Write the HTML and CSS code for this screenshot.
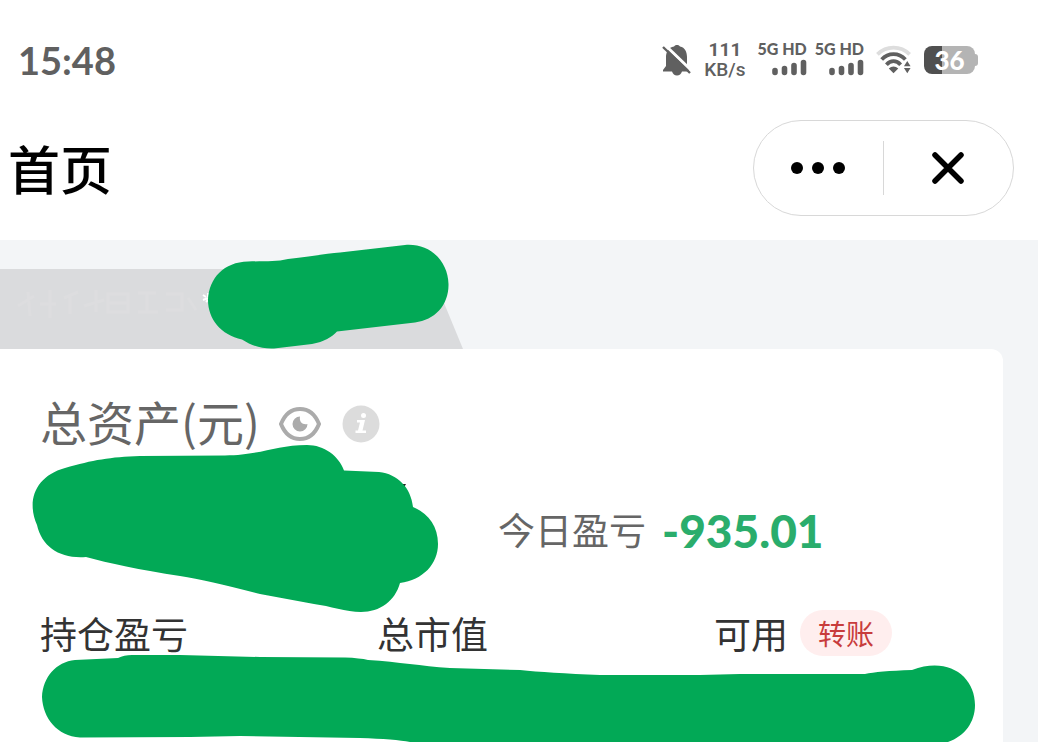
FILE: index.html
```html
<!DOCTYPE html>
<html lang="zh-CN">
<head>
<meta charset="utf-8">
<meta name="viewport" content="width=device-width, initial-scale=1">
<title>首页</title>
<link rel="stylesheet" href="styles.css">
</head>
<body>
<header class="header">
  <div class="status">
    <time class="clock">15:48</time>
    <div class="indicators">
      <svg class="bell" viewBox="0 0 30 34" aria-hidden="true">
        <path fill="#606060" d="M15 2c-1.500 0-2.500.7-3 1.500C6.500 4.500 4 9 4 14v9l-3 4v1.500h9c1 2.500 2.500 4 5 4s4-1.500 5-4h7V27l-2-4V14c0-5-2-9.500-7-10.500-.5-.8-1.500-1.500-3-1.500z"/>
        <path stroke="#fff" stroke-width="3" d="M3 2l28 27"/>
        <path stroke="#606060" stroke-width="2.400" d="M1 4l27 26"/>
      </svg>
      <div class="speed"><span>111</span><span class="unit">KB/s</span></div>
      <div class="signals">
        <div class="signal"><span>5G HD</span>
          <svg viewBox="0 0 36 17" aria-hidden="true"><g stroke="#606060" stroke-width="5.600" stroke-linecap="round"><path d="M4 11.500v2M13.500 9.500v4M23 6.500v7M32.500 3.500v10"/></g></svg>
        </div>
        <div class="signal"><span>5G HD</span>
          <svg viewBox="0 0 36 17" aria-hidden="true"><g stroke="#606060" stroke-width="5.600" stroke-linecap="round"><path d="M4 11.500v2M13.500 9.500v4M23 6.500v7M32.500 3.500v10"/></g></svg>
        </div>
      </div>
      <svg class="wifi" viewBox="0 0 38 30" aria-hidden="true">
        <g fill="none" stroke-width="4">
          <path stroke="#ddd" d="M1.500 9C11-.5 26-.5 35.500 9"/>
          <path stroke="#606060" d="M6 14.500C13 7 24 7 31 14.500"/>
          <path stroke="#606060" d="M11 20c4.500-5 10.500-5 15 0"/>
        </g>
        <path fill="#606060" d="M13.500 24c3-3 7-3 10 0L18.500 29zM29.500 21.500L33 16l3.500 5.500zM29.500 23.500L33 29l3.500-5.500z"/>
      </svg>
      <div class="battery"><span class="cell">36</span></div>
    </div>
  </div>
  <div class="nav">
    <h1>首页</h1>
    <div class="capsule">
      <button type="button" aria-label="更多">
        <svg viewBox="0 0 56 14" width="56" height="14"><circle cx="6" cy="7" r="6"/><circle cx="27" cy="7" r="6"/><circle cx="48" cy="7" r="6"/></svg>
      </button>
      <button type="button" aria-label="关闭">
        <svg viewBox="0 0 34 34" width="34" height="34"><path d="M3 4l26 26M29 4L3 30" stroke="#000" stroke-width="5.500" stroke-linecap="round"/></svg>
      </button>
    </div>
  </div>
</header>

<main class="main">
  <div class="tabs">
    <div class="tab"></div>
    <svg class="mark mark-tab" viewBox="0 240 480 110" aria-hidden="true">
      <g fill="none" stroke="#dddddf" stroke-width="3">
        <path d="M18 306l16-10M28 292l2 24M40 304h16M50 290v28M64 298l14-6M70 294v20M84 306l20-6M96 290v22M108 294h20v18h-20zM108 303h20M138 293h18M147 293v20M138 312h20M166 294h16v16h-16M188 298l8 12"/>
      </g>
      <path stroke="#fff" stroke-width="2" d="M203 295l3 2M208 293v4M203 300l5-2M206 302l2-2"/>
      <path fill="#02a956" d="M248 261.500C266 261 276 262 288 259C310 257 328 253 340 252.500L405 245C430 243 448 261 448.500 284C449 305 435 320 415 322.500L337 331.500C332 337 324 342 312 344L274 348.500C262 349 252 346 242 339.500C221 335 208 319 208 300C209 278 224 262 248 261.500Z"/>
    </svg>
  </div>

  <section class="card">
    <div class="heading">
      <h2>总资产(元)</h2>
      <button type="button" class="icon" aria-label="隐藏金额">
        <svg viewBox="0 0 44 36" width="44" height="36">
          <path fill="none" stroke="#ababab" stroke-width="4" d="M3 18C7 8 14 3 22 3s15 5 19 15c-4 10-11 15-19 15S7 28 3 18z"/>
          <path fill="#ababab" d="M22 10.500a7.500 7.500 0 1 0 7.500 7.500c-5 1-8.500-2-7.500-7.500z"/>
        </svg>
      </button>
      <button type="button" class="icon" aria-label="说明">
        <svg viewBox="0 0 38 38" width="38" height="38">
          <circle cx="19" cy="19" r="18.500" fill="#dcdcdc"/>
          <circle cx="21.500" cy="10.500" r="2.500" fill="#fff"/>
          <path fill="#fff" d="M15 15h8l-2.500 10.500H24V28H13.500v-2.500H16l2-8h-3z"/>
        </svg>
      </button>
    </div>
    <div class="today">
      <span class="today-label">今日盈亏</span>
      <strong class="today-value">-935.01</strong>
    </div>
    <div class="metrics">
      <span>持仓盈亏</span>
      <span>总市值</span>
      <span class="available">可用 <button type="button" class="transfer">转账</button></span>
    </div>
    <svg class="mark mark-card" viewBox="0 349 1003 393" aria-hidden="true">
      <path fill="#222" d="M397 484h9l-4 7z"/>
      <g fill="#02a956">
        <path d="M65 468C93 460 110 457 140 456L225 455.500C262 455 276 445 307 445C324 445 339 456 344 470.500L379 472C398 474 411 488 413 507C428 513 438 526 438 544C438 564 423 580 400 583C395 601 380 612 361 612C346 612 330 606 314 604L260 594C226 585 200 579 180 576C140 570 108 563 86 557C60 559 42 547 37 525C26 500 36 476 65 468Z"/>
        <path d="M75 660L118 658Q124 655 132 655L180 655L260 657L345 657.500Q360 658 368 660C400 662 420 666 450 668L520 670Q548 673 600 675L700 675L740 674L865 674Q878 671 912 670C948 656 975 676 975 705C975 722 965 736 948 742L410 742Q395 739 360 738L240 736L190 737L80 737.500C57 736 43 718 42 697C43 677 56 662 75 660Z"/>
      </g>
    </svg>
  </section>
</main>
</body>
</html>
```
FILE: styles.css
```css
* {
  box-sizing: border-box;
}

body {
  margin: 0;
  min-height: 100vh;
  display: flex;
  flex-direction: column;
  background: #f3f5f7;
  color: #333;
  font-family: "Noto Sans CJK SC", sans-serif;
}

h1,
h2 {
  margin: 0;
}

button {
  display: flex;
  align-items: center;
  justify-content: center;
  padding: 0;
  border: 0;
  background: none;
  font: inherit;
}

.header {
  height: 240px;
  background: #fff;
}

.status {
  display: flex;
  align-items: center;
  justify-content: space-between;
  height: 120px;
  padding: 0 60px 0 18px;
  color: #606060;
  font-family: Lato, sans-serif;
  font-weight: 700;
}

.clock {
  font-size: 38px;
  line-height: 46px;
}

.indicators {
  display: flex;
  align-items: center;
  gap: 12px;
}

.bell {
  width: 30px;
  height: 34px;
}

.speed {
  display: flex;
  flex-direction: column;
  align-items: center;
  font-family: Roboto, sans-serif;
  font-size: 19px;
  line-height: 20px;
}

.unit {
  font-weight: 500;
}

.signals {
  display: flex;
  gap: 8px;
}

.signal {
  display: flex;
  flex-direction: column;
  align-items: flex-end;
  gap: 2px;
  padding-bottom: 4px;
  font-size: 16px;
  line-height: 16px;
  font-weight: 900;
}

.signal svg {
  width: 36px;
  height: 17px;
}

.wifi {
  width: 36px;
  height: 30px;
}

.battery {
  display: flex;
  align-items: center;
}

.battery::after {
  content: "";
  width: 3px;
  height: 12px;
  border-radius: 0 4px 4px 0;
  background: #b4b4b4;
}

.cell {
  width: 51px;
  height: 28px;
  border-radius: 8px;
  background: linear-gradient(to right, #505050 36%, #b4b4b4 36%);
  color: #fff;
  font-size: 26px;
  line-height: 28px;
  font-weight: 900;
  text-align: center;
}

.nav {
  display: flex;
  align-items: center;
  justify-content: space-between;
  height: 96px;
  padding: 0 24px 0 8px;
}

.nav h1 {
  color: #000;
  font-size: 52px;
  line-height: 76px;
  font-weight: 500;
}

.capsule {
  display: flex;
  width: 261px;
  height: 96px;
  padding: 20px 0;
  border: 1px solid #d8d8d8;
  border-radius: 48px;
}

.capsule button {
  flex: 1;
}

.capsule button + button {
  border-left: 1px solid #d8d8d8;
}

.main {
  flex: 1;
  display: flex;
  flex-direction: column;
}

.tabs {
  position: relative;
  padding-top: 29px;
}

.tab {
  width: 463px;
  height: 80px;
  background: #dadbdd;
  clip-path: polygon(0 0, 430px 0, 100% 100%, 0 100%);
}

.mark {
  position: absolute;
  top: 0;
  left: 0;
  pointer-events: none;
}

.mark-tab {
  width: 480px;
  height: 110px;
}

.mark-card {
  width: 1003px;
  height: 393px;
}

.card {
  position: relative;
  flex: 1;
  margin-right: 35px;
  padding: 40px 0 0 40px;
  border-radius: 0 12px 0 0;
  background: #fff;
}

.heading {
  display: flex;
  align-items: center;
  gap: 20px;
  height: 70px;
}

.heading h2 {
  margin-right: -2px;
  padding-bottom: 6px;
  color: #666;
  font-size: 47px;
  line-height: 64px;
  font-weight: 400;
}

.heading .icon {
  height: 38px;
}

.today {
  display: flex;
  align-items: center;
  gap: 16px;
  height: 56px;
  margin: 44px 0 0 458px;
}

.today-label {
  padding-bottom: 4px;
  color: #666;
  font-size: 37px;
  line-height: 52px;
}

.today-value {
  color: #2aad6c;
  font-family: Lato, sans-serif;
  font-size: 46px;
  line-height: 56px;
  font-weight: 900;
}

.metrics {
  display: grid;
  grid-template-columns: 35% 35% 1fr;
  align-items: center;
  height: 56px;
  margin-top: 46px;
  font-size: 37px;
  line-height: 56px;
}

.available {
  display: flex;
  align-items: center;
  gap: 12px;
}

.transfer {
  width: 92px;
  height: 46px;
  border-radius: 23px;
  background: #ffeeee;
  color: #c83c3c;
  font-size: 28px;
  line-height: 46px;
}
```
